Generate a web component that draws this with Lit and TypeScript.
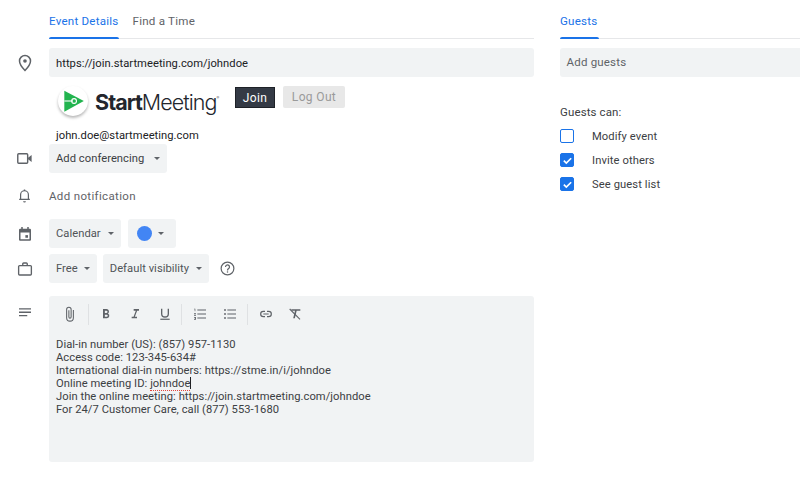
import { LitElement, html, css, svg } from "lit";
import { customElement } from "lit/decorators.js";

const icons = {
  pin: svg`<path d="M12 3a6.600 6.600 0 0 0-6.600 6.600C5.400 14.200 12 21 12 21s6.600-6.800 6.600-11.400A6.600 6.600 0 0 0 12 3z" fill="none" stroke="#5f6368" stroke-width="1.800"/><circle cx="12" cy="9.600" r="2.200" fill="#5f6368"/>`,
  video: svg`<rect x="3.500" y="6" width="12.500" height="12" rx="1.200" fill="none" stroke="#5f6368" stroke-width="1.800"/><path d="M16.500 11l4.500-3.500v9L16.500 13z" fill="#5f6368"/>`,
  bell: svg`<path d="M6.500 17.200v-6.400a5.500 5.500 0 0 1 11 0v6.400M4.500 17.500h15" fill="none" stroke="#5f6368" stroke-width="1.700"/><path d="M10 20h4a2 2 0 0 1-4 0zM11 3.500h2v2h-2z" fill="#5f6368"/>`,
  cal: svg`<path d="M7 2.500h2V5h6V2.500h2V5h1.500A1.500 1.500 0 0 1 20 6.500v13a1.500 1.500 0 0 1-1.500 1.500h-13A1.500 1.500 0 0 1 4 19.500v-13A1.500 1.500 0 0 1 5.500 5H7zM6 10v9h12v-9z" fill="#5f6368"/><rect x="12.500" y="13.500" width="3.500" height="3.500" fill="#5f6368"/>`,
  case: svg`<rect x="3.500" y="7.500" width="17" height="12.500" rx="1.300" fill="none" stroke="#5f6368" stroke-width="1.800"/><path d="M9 7.500V5.200A1.200 1.200 0 0 1 10.200 4h3.600A1.200 1.200 0 0 1 15 5.200v2.300" fill="none" stroke="#5f6368" stroke-width="1.800"/>`,
  lines: svg`<path d="M4 6.500h16M4 11h16M4 15.500h11" fill="none" stroke="#5f6368" stroke-width="1.800"/>`,
  help: svg`<circle cx="12" cy="12" r="9" fill="none" stroke="#5f6368" stroke-width="1.700"/><path d="M9.200 9.800a2.800 2.800 0 1 1 4.500 2.200c-1 .8-1.700 1.300-1.700 2.700" fill="none" stroke="#5f6368" stroke-width="1.700"/><rect x="11.100" y="16" width="1.800" height="1.800" fill="#5f6368"/>`,
  clip: svg`<path d="M16.500 6.500v10.500a4.500 4.500 0 0 1-9 0V6a3 3 0 0 1 6 0v10a1.500 1.500 0 0 1-3 0V7" fill="none" stroke="#5f6368" stroke-width="1.400"/>`,
  bold: svg`<path d="M7.500 4.500h5.200a3.700 3.700 0 0 1 2.300 6.700 3.900 3.900 0 0 1-1.800 7.300H7.500zM10.300 7v3.500h2.200a1.750 1.750 0 0 0 0-3.500zM10.300 13v3h2.800a1.500 1.500 0 0 0 0-3z" fill="#5f6368" fill-rule="evenodd"/>`,
  italic: svg`<path d="M10 4.500h8V7h-2.800l-3.400 9H15v2.500H7V16h2.800l3.400-9H10z" fill="#5f6368"/>`,
  under: svg`<path d="M7 4v7.500a5 5 0 0 0 10 0V4" fill="none" stroke="#5f6368" stroke-width="2"/><rect x="5" y="19" width="14" height="1.800" fill="#5f6368"/>`,
  ol: svg`<path d="M8 6h13M8 12h13M8 18h13" fill="none" stroke="#5f6368" stroke-width="1.800"/><path d="M3 4h2v4H4V5H3zM3 11h3v1l-2 1.500h2v1H3v-1l2-1.500H3zM3 16.500h3v4H3v-1h2v-.5H4v-1h1v-.5H3z" fill="#5f6368"/>`,
  ul: svg`<path d="M8 6h13M8 12h13M8 18h13" fill="none" stroke="#5f6368" stroke-width="1.800"/><circle cx="4.500" cy="6" r="1.400" fill="#5f6368"/><circle cx="4.500" cy="12" r="1.400" fill="#5f6368"/><circle cx="4.500" cy="18" r="1.400" fill="#5f6368"/>`,
  link: svg`<path d="M10.500 8H8a4 4 0 0 0 0 8h2.500M13.500 8H16a4 4 0 0 1 0 8h-2.500M8 12h8" fill="none" stroke="#5f6368" stroke-width="1.800"/>`,
  clear: svg`<path d="M6.500 5H20v2.300h-5.500l-2.700 11.200H9.300l2.700-11.200H6.500z" fill="#5f6368"/><path d="M4 4.500l15.500 15.500" stroke="#5f6368" stroke-width="1.600"/>`,
};

const icon = (n: keyof typeof icons, size = 16) => html`<svg width=${size} height=${size} viewBox="0 0 24 24">${icons[n]}</svg>`;

@customElement("app-root")
export class AppRoot extends LitElement {
  static styles = css`
    :host { display: block; width: 800px; height: 500px; overflow: hidden; background: #fff; font-family: Roboto, "Liberation Sans", sans-serif; font-size: 11.200px; letter-spacing: .04px; color: #3c4043; }
    * { box-sizing: border-box; }
    .page { display: grid; grid-template-columns: 534px 266px; column-gap: 26px; width: 826px; }
    .left, .right { display: flex; flex-direction: column; min-width: 0; }
    .tabs { display: flex; gap: 14px; height: 39px; margin-left: 49px; border-bottom: 1px solid #e6e7e9; font-size: 11.600px; letter-spacing: .22px; color: #5f6368; }
    .right .tabs { margin-left: 0; }
    .tab { position: relative; padding-top: 14px; line-height: 15px; }
    .tab.on { color: #1a73e8; }
    .tab.on::after { content: ""; position: absolute; left: 0; right: 0; bottom: -1px; height: 2px; border-radius: 2px 2px 0 0; background: #1a73e8; }
    .guests { width: 39px; }
    .row { display: flex; align-items: center; }
    .ic { width: 49px; flex: none; display: flex; justify-content: center; }
    .ic svg { display: block; }
    .field { flex: 1; height: 29px; background: #f1f3f4; border-radius: 3px; padding: 1px 7px 0; display: flex; align-items: center; color: #202124; }
    .loc { margin-top: 9px; }
    .plug { margin-left: 49px; height: 52px; display: flex; align-items: flex-start; }
    .logo { display: flex; align-items: center; margin-left: 9px; width: 177px; height: 37px; margin-top: 4px; }
    .mark { width: 30px; height: 30px; border-radius: 50%; background: #fff; box-shadow: 0 2px 3px rgba(0,0,0,.28); margin: 2px 7px 0 0; display: flex; align-items: center; justify-content: center; flex: none; }
    .word { font-family: Inter, "Liberation Sans", sans-serif; font-size: 21.500px; letter-spacing: -.950px; color: #23262d; line-height: 30px; white-space: nowrap; }
    .word b { font-weight: 700; }
    .word span { font-weight: 300; }
    .word sup { font-size: 4px; vertical-align: 11px; color: #555; letter-spacing: 0; }
    .btn { display: flex; align-items: center; justify-content: center; font-size: 12px; letter-spacing: .35px; }
    .join { width: 40px; margin-top: 10px; margin-right: 8px; height: 21px; background: #343a45; border: 1px solid #1e2127; color: #fff; }
    .logout { width: 62px; margin-top: 9px; height: 22px; background: #e8e8e8; color: #9a9a9a; border-radius: 2px; }
    .email { margin-left: 56px; height: 13px; line-height: 13px; color: #202124; }
    .chips { display: flex; gap: 6px; align-items: center; }
    .chips.wide { gap: 7px; }
    .chip { height: 29px; background: #f1f3f4; border-radius: 3px; padding: 0 7px; display: flex; align-items: center; white-space: nowrap; color: #505357; }
    .caret { width: 0; height: 0; border-left: 3.500px solid transparent; border-right: 3.500px solid transparent; border-top: 3.500px solid #5f6368; margin-left: 7px; }
    .free .caret { margin-left: 6px; }
    .conf { margin-top: 2px; }
    .conf .chip { width: 118px; color: #3c4043; }
    .conf .caret { margin-left: 10px; }
    .notif { height: 29px; margin-top: 8px; font-size: 11.500px; letter-spacing: .35px; color: #5f6368; }
    .cal { margin-top: 9px; }
    .vis { margin-top: 6px; }
    .dot { width: 15px; height: 15px; border-radius: 50%; background: #4285f4; margin-left: 1px; }
    .color { width: 48px; padding-left: 8px; }
    .color .caret { margin-left: 6px; }
    .helpic { margin-left: 4px; display: flex; }
    .edit { margin-top: 13px; align-items: flex-start; }
    .edit .ic { padding-top: 8px; }
    .box { flex: 1; height: 166px; background: #f1f3f4; border-radius: 3px; padding: 0 7px; }
    .bar { display: flex; align-items: center; height: 36px; }
    .tb { width: 16px; height: 16px; display: flex; flex: none; align-items: center; justify-content: center; }
    .clipb { margin-left: 5px; width: 18px; height: 18px; }
    .sep { width: 1px; height: 21px; background: #dfe1e3; flex: none; }
    .s1 { margin-left: 9px; }
    .s2 { margin-left: 8px; }
    .s3 { margin-left: 9px; }
    .b1 { margin-left: 9px; }
    .b2 { margin-left: 10px; }
    .b3 { margin-left: 10px; }
    .g { margin-left: 13px; }
    .g14 { margin-left: 14px; }
    .text { margin-top: 6px; line-height: 13px; color: #3c4043; }
    .spell { border-bottom: 1px dotted #e0443a; }
    .cursor { display: inline-block; width: 1px; height: 12px; background: #202124; vertical-align: -2px; }
    .gfield { height: 29px; margin-top: 9px; background: #f1f3f4; border-radius: 3px; padding: 0 6.500px 1px; display: flex; align-items: center; color: #5f6368; font-size: 11.500px; letter-spacing: .2px; }
    .can { margin-top: 27px; line-height: 16px; font-size: 11.500px; letter-spacing: .12px; color: #3c4043; margin-bottom: 4px; }
    .opt { display: flex; align-items: center; height: 24px; letter-spacing: .1px; }
    .box-c { width: 14px; height: 14px; border-radius: 2px; border: 1.500px solid #1a73e8; margin-right: 18px; flex: none; display: flex; align-items: center; justify-content: center; }
    .opt.on .box-c { background: #1a73e8; }
  `;

  render() {
    const check = html`<svg width="11" height="11" viewBox="0 0 12 12"><path d="M2 6.200l2.700 2.700L10 3.500" fill="none" stroke="#fff" stroke-width="1.800"/></svg>`;
    return html`<div class="page">
      <div class="left">
        <div class="tabs"><div class="tab on">Event Details</div><div class="tab">Find a Time</div></div>
        <div class="row loc"><div class="ic">${icon("pin", 20)}</div><div class="field">https://join.startmeeting.com/johndoe</div></div>
        <div class="plug">
          <div class="logo">
            <div class="mark"><svg width="26" height="26" viewBox="0 0 24 24"><path d="M4 2.500L22 12 4 22z" fill="#22b44f"/><path d="M4 12h8" stroke="#fff" stroke-width="1"/><circle cx="13" cy="12" r="2.200" fill="none" stroke="#fff" stroke-width="1"/></svg></div>
            <div class="word"><b>Start</b><span>Meeting</span><sup>®</sup></div>
          </div>
          <div class="btn join">Join</div>
          <div class="btn logout">Log Out</div>
        </div>
        <div class="email">john.doe@startmeeting.com</div>
        <div class="row conf"><div class="ic">${icon("video", 19)}</div><div class="chip">Add conferencing<i class="caret"></i></div></div>
        <div class="row notif"><div class="ic">${icon("bell", 17)}</div><div>Add notification</div></div>
        <div class="row cal"><div class="ic">${icon("cal", 18)}</div><div class="chips wide"><div class="chip">Calendar<i class="caret"></i></div><div class="chip color"><i class="dot"></i><i class="caret"></i></div></div></div>
        <div class="row vis"><div class="ic">${icon("case", 18)}</div><div class="chips"><div class="chip free">Free<i class="caret"></i></div><div class="chip">Default visibility<i class="caret"></i></div><div class="helpic">${icon("help", 17)}</div></div></div>
        <div class="row edit"><div class="ic">${icon("lines", 18)}</div>
          <div class="box">
            <div class="bar">
              <span class="tb clipb">${icon("clip", 20)}</span>
              <span class="sep s1"></span>
              <span class="tb b1">${icon("bold", 16)}</span>
              <span class="tb g">${icon("italic", 16)}</span>
              <span class="tb g14">${icon("under", 16)}</span>
              <span class="sep s2"></span>
              <span class="tb b2">${icon("ol", 16)}</span>
              <span class="tb g14">${icon("ul", 16)}</span>
              <span class="sep s3"></span>
              <span class="tb b3">${icon("link", 16)}</span>
              <span class="tb g">${icon("clear", 16)}</span>
            </div>
            <div class="text">
              <div>Dial-in number (US): (857) 957-1130</div>
              <div>Access code: 123-345-634#</div>
              <div>International dial-in numbers: https://stme.in/i/johndoe</div>
              <div>Online meeting ID: <span class="spell">johndoe</span><i class="cursor"></i></div>
              <div>Join the online meeting: https://join.startmeeting.com/johndoe</div>
              <div>For 24/7 Customer Care, call (877) 553-1680</div>
            </div>
          </div>
        </div>
      </div>
      <div class="right">
        <div class="tabs"><div class="tab on guests">Guests</div></div>
        <div class="gfield">Add guests</div>
        <div class="can">Guests can:</div>
        <div class="opt"><i class="box-c"></i><span>Modify event</span></div>
        <div class="opt on"><i class="box-c">${check}</i><span>Invite others</span></div>
        <div class="opt on"><i class="box-c">${check}</i><span>See guest list</span></div>
      </div>
    </div>`;
  }
}
